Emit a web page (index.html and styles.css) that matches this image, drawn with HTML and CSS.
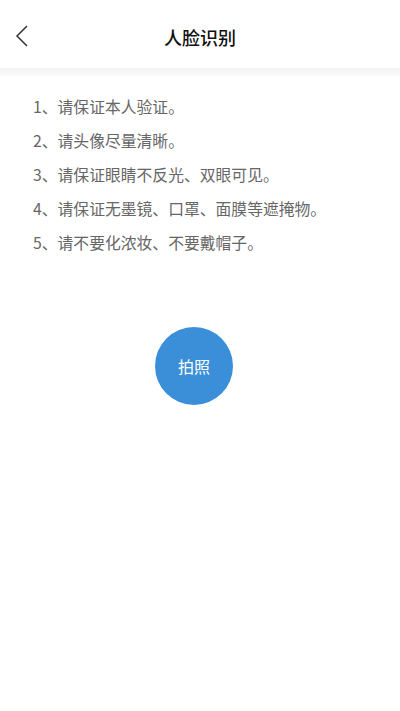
FILE: index.html
```html
<!DOCTYPE html>
<html lang="zh">
<head>
    <meta charset="UTF-8">
    <meta name="viewport" content="width=device-width, initial-scale=1.0">
    <title>人脸识别</title>
    <link rel="stylesheet" href="styles.css">
</head>
<body>
    <!-- Barra superior -->
    <div class="header">
        <span class="back">
            <svg width="14" height="22" viewBox="0 0 14 22"><path d="M12 1 L2 11 L12 21" fill="none" stroke="#333" stroke-width="1.5"/></svg>
        </span>
        <h1>人脸识别</h1>
    </div>
    <div class="divider"></div>

    <!-- Instrucciones -->
    <ul class="tips">
        <li>1、请保证本人验证。</li>
        <li>2、请头像尽量清晰。</li>
        <li>3、请保证眼睛不反光、双眼可见。</li>
        <li>4、请保证无墨镜、口罩、面膜等遮掩物。</li>
        <li>5、请不要化浓妆、不要戴帽子。</li>
    </ul>

    <div class="action">
        <button class="shot">拍照</button>
    </div>
</body>
</html>
```

FILE: styles.css
```css
body, h1, ul, li, button, div {
    margin: 0;
    padding: 0;
    box-sizing: border-box;
    font-family: "Noto Sans CJK SC", "Noto Sans", sans-serif;
}

body {
    background-color: #ffffff;
    width: 400px;
    min-height: 711px;
}

.header {
    position: relative;
    height: 68px;
    display: flex;
    align-items: center;
    justify-content: center;
    padding-top: 6px;
}

.header h1 {
    font-size: 18px;
    font-weight: 500;
    color: #111;
}

.back {
    position: absolute;
    left: 15px;
    top: 25px;
}

.divider {
    height: 8px;
    background: linear-gradient(#f3f3f3, #fafafa);
}

/* Lista de instrucciones */
.tips {
    list-style: none;
    padding: 14px 0 0 33px;
}

.tips li {
    font-size: 15.8px;
    line-height: 34px;
    color: #666;
}

.action {
    display: flex;
    justify-content: center;
    padding: 67px 12px 0 0;
}

.shot {
    width: 78px;
    height: 78px;
    border-radius: 50%;
    border: none;
    background-color: #3a8fd8;
    color: #fff;
    font-size: 16px;
}
```
